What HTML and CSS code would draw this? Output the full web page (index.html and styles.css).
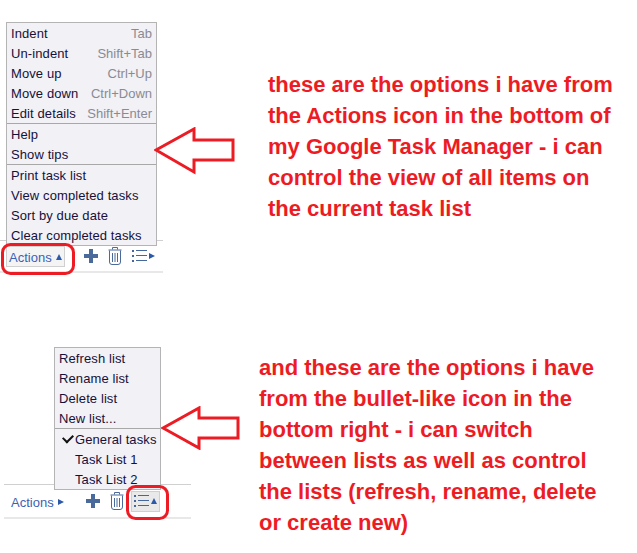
FILE: index.html
```html
<!DOCTYPE html>
<html lang="en">

<head>
  <meta charset="UTF-8">
  <title>Google Task Manager menus</title>
  <link rel="stylesheet" href="styles.css">
</head>

<body>

  <section class="shot shot-actions">
    <div class="panel">
      <div class="menu">
        <ul class="menu-group">
          <li><span>Indent</span><span class="key">Tab</span></li>
          <li><span>Un-indent</span><span class="key">Shift+Tab</span></li>
          <li><span>Move up</span><span class="key">Ctrl+Up</span></li>
          <li><span>Move down</span><span class="key">Ctrl+Down</span></li>
          <li><span>Edit details</span><span class="key">Shift+Enter</span></li>
        </ul>
        <ul class="menu-group">
          <li>Help</li>
          <li>Show tips</li>
        </ul>
        <ul class="menu-group">
          <li>Print task list</li>
          <li>View completed tasks</li>
          <li>Sort by due date</li>
          <li>Clear completed tasks</li>
        </ul>
      </div>
      <div class="toolbar">
        <span class="actions-btn is-open">Actions <i class="tri-up"></i></span>
        <svg class="icon-plus" width="14" height="14" viewBox="0 0 14 14"><path d="M5 0h4v5h5v4H9v5H5V9H0V5h5z" /></svg>
        <svg class="icon-trash" width="14" height="18" viewBox="0 0 14 18"><path d="M4.500 2.500V.5h5v2M.5 3h13M1.500 3.500V15q0 2.500 2.500 2.500h6q2.500 0 2.500-2.500V3.500M4.500 6v9M7 6v9M9.500 6v9" /></svg>
        <span class="list-btn">
          <svg class="icon-list" width="15" height="12" viewBox="0 0 15 12"><path d="M0 0h2v2H0zM0 5h2v2H0zM0 10h2v2H0zM4 0h11v1H4zM4 5h11v1H4zM4 10h11v1H4z" /></svg>
          <i class="tri-right"></i>
        </span>
      </div>
    </div>
    <p class="note">these are the options i have from the Actions icon in the bottom of my Google Task Manager - i can control the view of all items on the current task list</p>

    <svg class="arrow arrow-one" width="82" height="48" viewBox="0 0 82 48"><path d="M2 23 40 2V13H79V33H40V45z" /></svg>
    <svg class="ring ring-one" width="74" height="32" viewBox="0 0 74 32"><rect x="1.500" y="1.500" width="71" height="29" rx="8" /></svg>
  </section>

  <section class="shot shot-lists">
    <div class="panel">
      <div class="menu">
        <ul class="menu-group">
          <li>Refresh list</li>
          <li>Rename list</li>
          <li>Delete list</li>
          <li>New list...</li>
        </ul>
        <ul class="menu-group lists">
          <li class="checked">General tasks</li>
          <li>Task List 1</li>
          <li>Task List 2</li>
        </ul>
      </div>
      <div class="toolbar">
        <span class="actions-btn">Actions <i class="tri-right"></i></span>
        <svg class="icon-plus" width="14" height="14" viewBox="0 0 14 14"><path d="M5 0h4v5h5v4H9v5H5V9H0V5h5z" /></svg>
        <svg class="icon-trash" width="14" height="18" viewBox="0 0 14 18"><path d="M4.500 2.500V.5h5v2M.5 3h13M1.500 3.500V15q0 2.500 2.500 2.500h6q2.500 0 2.500-2.500V3.500M4.500 6v9M7 6v9M9.500 6v9" /></svg>
        <span class="list-btn is-open">
          <svg class="icon-list" width="15" height="12" viewBox="0 0 15 12"><path d="M0 0h2v2H0zM0 5h2v2H0zM0 10h2v2H0zM4 0h11v1H4zM4 5h11v1H4zM4 10h11v1H4z" /></svg>
          <i class="tri-up"></i>
        </span>
      </div>
    </div>
    <p class="note">and these are the options i have from the bullet-like icon in the bottom right - i can switch between lists as well as control the lists (refresh, rename, delete or create new)</p>

    <svg class="arrow arrow-two" width="80" height="44" viewBox="0 0 80 44"><path d="M2 22 38 2V12H77V32H38V42z" /></svg>
    <svg class="ring ring-two" width="43" height="35" viewBox="0 0 43 35"><rect x="1.500" y="1.500" width="40" height="32" rx="8" /></svg>
  </section>

</body>

</html>
```

FILE: styles.css
```css
* {
  box-sizing: border-box;
  margin: 0;
  padding: 0;
}

body {
  width: 637px;
  height: 553px;
  background: white;
  font-family: 'Liberation Sans', Arial, sans-serif;
  overflow: hidden;
}

.shot {
  position: relative;
  display: flex;
}

.shot-actions {
  height: 347px;
  padding-top: 22px;
}

.panel {
  display: flex;
  flex-direction: column;
  flex: none;
}

.shot-actions .panel {
  width: 163px;
}

.shot-lists .panel {
  width: 191px;
}

.menu {
  background: #f1f1f6;
  border: 1px solid #b4b4b4;
  color: #17103a;
  font-size: 13px;
  letter-spacing: 0.1px;
  position: relative;
  z-index: 1;
}

.shot-actions .menu {
  width: 151px;
  margin-left: 6px;
}

.shot-lists .menu {
  width: 107px;
  margin-left: 54px;
}

.menu-group {
  list-style: none;
}

.menu-group + .menu-group {
  border-top: 1px solid #a8a8a8;
}

.menu-group li {
  display: flex;
  justify-content: space-between;
  height: 20px;
  line-height: 22px;
  padding: 0 4px;
  white-space: nowrap;
}

.key {
  color: #8a8a94;
  letter-spacing: 0;
}

.lists li {
  padding: 0 0 0 20px;
  position: relative;
}

.checked::before {
  content: "";
  position: absolute;
  left: 8px;
  top: 5px;
  width: 8px;
  height: 5px;
  border-left: 2px solid #111;
  border-bottom: 2px solid #111;
  transform: rotate(-45deg);
}

.toolbar {
  display: flex;
  align-items: center;
  margin-top: -6px;
  border-top: 1px solid #d0d0d0;
  border-bottom: 2px solid #e8e8e8;
  color: #3a62b4;
  font-size: 13px;
}

.shot-actions .toolbar {
  height: 33px;
  padding-left: 6px;
}

.shot-lists .toolbar {
  height: 35px;
  margin-left: 4px;
  padding-left: 4px;
}

.actions-btn {
  display: flex;
  align-items: center;
  gap: 4px;
  flex: none;
  height: 21px;
  width: 59px;
  padding: 2px 0 0 2px;
  border: 1px solid transparent;
  white-space: nowrap;
}

.actions-btn.is-open {
  background: #f4f4f4;
  border-color: #d0d0d0;
}

.tri-up {
  width: 0;
  height: 0;
  border-left: 3px solid transparent;
  border-right: 3px solid transparent;
  border-bottom: 6px solid #2a5aa8;
}

.tri-right {
  width: 0;
  height: 0;
  border-top: 3px solid transparent;
  border-bottom: 3px solid transparent;
  border-left: 6px solid #2a5aa8;
}

.icon-plus {
  flex: none;
  margin-left: 19px;
  fill: #4a6a9c;
}

.icon-trash {
  flex: none;
  margin-left: 10px;
  fill: none;
  stroke: #4a6a9c;
  stroke-width: 1;
}

.list-btn {
  display: flex;
  align-items: center;
  gap: 2px;
  flex: none;
  height: 21px;
  margin-left: 7px;
  padding: 0 2px;
  border: 1px solid transparent;
}

.list-btn.is-open {
  background: #e9e9e9;
  border-color: #cfcfcf;
}

.icon-list {
  fill: #44689c;
}

.note {
  color: #ed1c24;
  font-size: 22px;
  font-weight: bold;
  line-height: 31px;
}

.shot-actions .note {
  width: 350px;
  margin: 47px 0 0 105px;
}

.shot-lists .note {
  width: 345px;
  margin: 5px 0 0 68px;
}

.arrow,
.ring {
  position: absolute;
  fill: none;
  stroke: #ed1c24;
  stroke-width: 3;
  z-index: 2;
}

.arrow-one {
  left: 154px;
  top: 127px;
}

.arrow-two {
  left: 161px;
  top: 59px;
}

.ring-one {
  left: 1px;
  top: 243px;
}

.ring-two {
  left: 126px;
  top: 138px;
}
```
